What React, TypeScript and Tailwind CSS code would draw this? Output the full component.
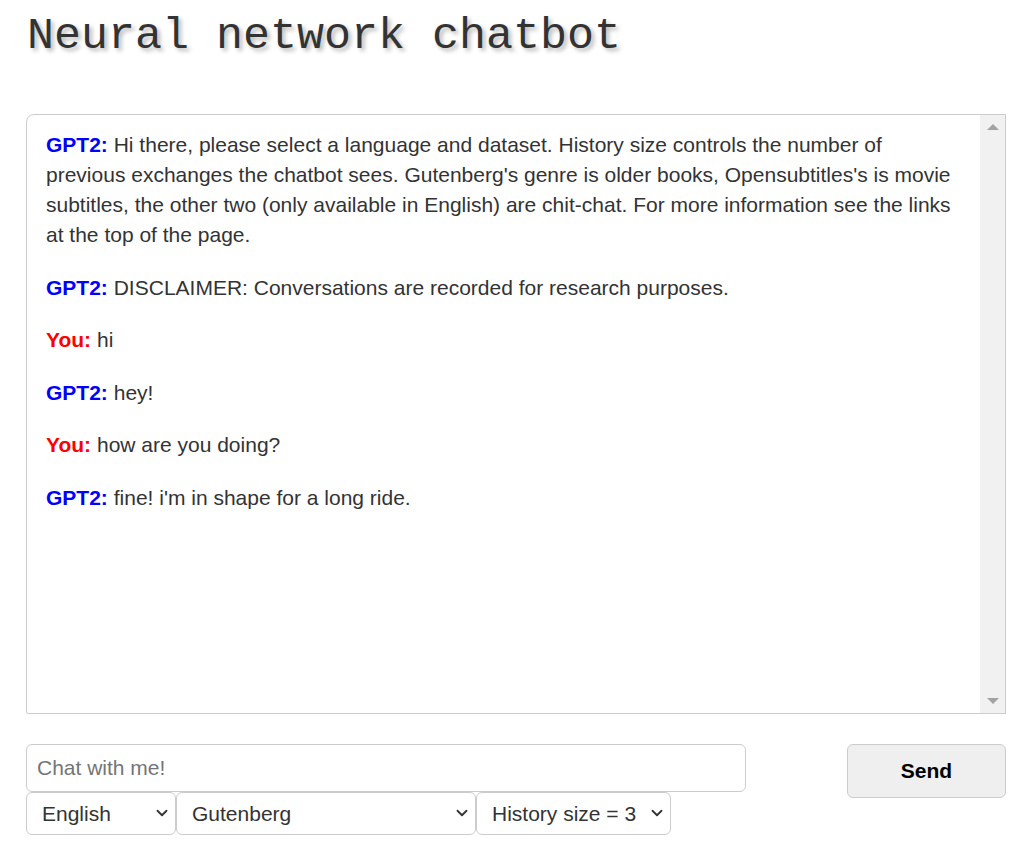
import { ChevronDown } from "lucide-react";

const messages = [
  {
    who: "GPT2",
    text: "Hi there, please select a language and dataset. History size controls the number of previous exchanges the chatbot sees. Gutenberg's genre is older books, Opensubtitles's is movie subtitles, the other two (only available in English) are chit-chat. For more information see the links at the top of the page.",
  },
  { who: "GPT2", text: "DISCLAIMER: Conversations are recorded for research purposes." },
  { who: "You", text: "hi" },
  { who: "GPT2", text: "hey!" },
  { who: "You", text: "how are you doing?" },
  { who: "GPT2", text: "fine! i'm in shape for a long ride." },
];

function Select({ value, width }: { value: string; width: string }) {
  return (
    <div className={`relative h-[43px] ${width}`}>
      <select
        defaultValue={value}
        className="appearance-none w-full h-full border border-[#ccc] rounded-[6px] bg-white pl-[15px] pr-8 text-[21px] text-[#333] outline-none"
      >
        <option>{value}</option>
      </select>
      <ChevronDown
        size={18}
        strokeWidth={2.4}
        className="absolute right-[5px] top-[12px] text-[#333] pointer-events-none"
      />
    </div>
  );
}

export default function App() {
  return (
    <div className="bg-white min-h-[850px] px-[26px] pt-[12px]" style={{ fontFamily: '"Liberation Sans", Arial, sans-serif' }}>
      <h1
        className="text-[45px] leading-[50px] text-[#333] pl-[1px] [text-shadow:3px_3px_4px_#bbb]"
        style={{ fontFamily: '"Liberation Mono", "Courier New", monospace' }}
      >
        Neural network chatbot
      </h1>

      <div className="mt-[52px] h-[600px] flex border border-[#ccc] rounded-tl-[8px] rounded-bl-[2px]">
        <div className="flex-1 pl-[19px] pr-[20px] pt-[15px]">
          {messages.map((m, i) => (
            <p key={i} className="text-[21px] leading-[30px] text-[#333] mb-[22.5px]">
              <b className={m.who === "GPT2" ? "text-[#0000ff]" : "text-[#ff0000]"}>{m.who}:</b> {m.text}
            </p>
          ))}
        </div>
        <div className="w-[25px] bg-[#f1f1f1] flex flex-col justify-between items-center py-[9px]">
          <div className="w-0 h-0 border-l-[6px] border-r-[6px] border-b-[6px] border-l-transparent border-r-transparent border-b-[#a3a3a3]" />
          <div className="w-0 h-0 border-l-[6px] border-r-[6px] border-t-[6px] border-l-transparent border-r-transparent border-t-[#a3a3a3]" />
        </div>
      </div>

      <div className="mt-[30px] flex justify-between items-start">
        <div>
          <input
            placeholder="Chat with me!"
            className="w-[720px] h-[48px] border border-[#ccc] rounded-[6px] px-[10px] text-[21px] text-[#333] placeholder:text-[#757575] outline-none"
          />
          <div className="flex">
            <Select value="English" width="w-[150px]" />
            <Select value="Gutenberg" width="w-[300px]" />
            <Select value="History size = 3" width="w-[195px]" />
          </div>
        </div>
        <button className="w-[159px] h-[54px] bg-[#efefef] border border-[#ccc] rounded-[6px] text-[21px] font-bold text-black">
          Send
        </button>
      </div>
    </div>
  );
}
